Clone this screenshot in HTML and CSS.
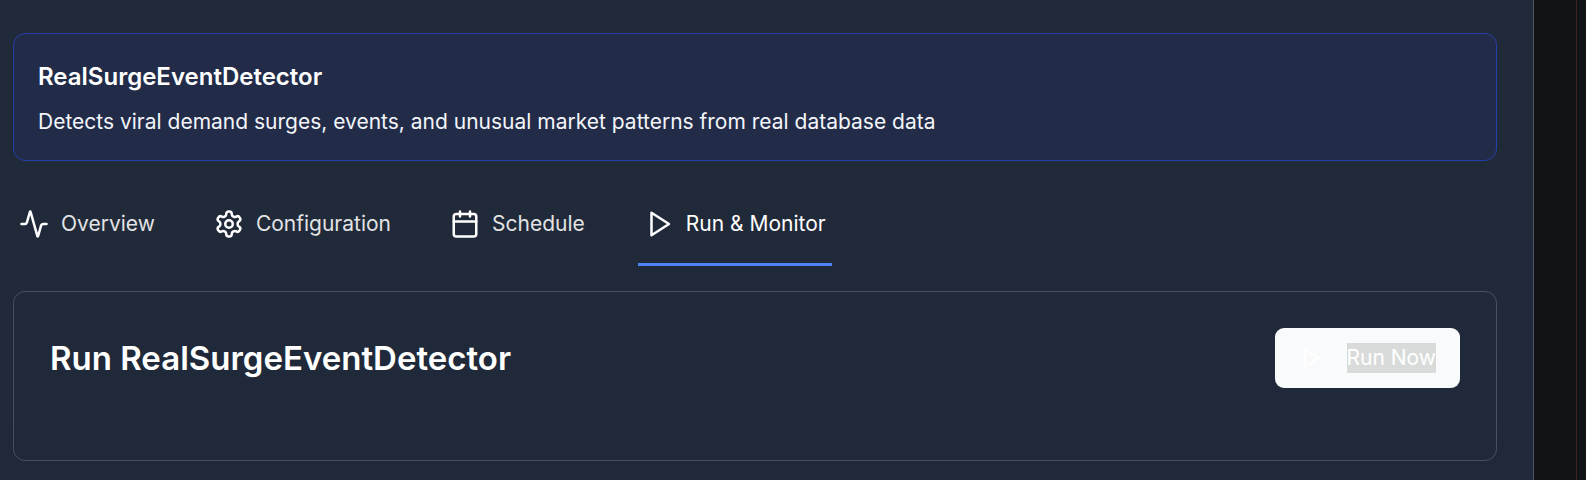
FILE: index.html
```html
<!DOCTYPE html>
<html lang="en">
<head>
<meta charset="utf-8">
<title>RealSurgeEventDetector</title>
<link rel="stylesheet" href="styles.css">
</head>
<body>
<div class="shell">
  <main class="panel">
    <section class="summary">
      <h3 class="summary-title">RealSurgeEventDetector</h3>
      <p class="summary-text">Detects viral demand surges, events, and unusual market patterns from real database data</p>
    </section>
    <nav class="tabs" role="tablist" aria-label="Agent sections">
      <button class="tab" type="button" role="tab" aria-selected="false">
        <svg class="icon" viewBox="0 0 24 24" aria-hidden="true"><path d="M22 12h-2.48a2 2 0 0 0-1.93 1.46l-2.35 8.36a.25.25 0 0 1-.48 0L9.24 2.18a.25.25 0 0 0-.48 0l-2.35 8.36A2 2 0 0 1 4.49 12H2"/></svg>
        <span>Overview</span>
      </button>
      <button class="tab" type="button" role="tab" aria-selected="false">
        <svg class="icon" viewBox="0 0 24 24" aria-hidden="true"><path d="M12.22 2h-.44a2 2 0 0 0-2 2v.18a2 2 0 0 1-1 1.73l-.43.25a2 2 0 0 1-2 0l-.15-.08a2 2 0 0 0-2.73.73l-.22.38a2 2 0 0 0 .73 2.73l.15.1a2 2 0 0 1 1 1.72v.51a2 2 0 0 1-1 1.74l-.15.09a2 2 0 0 0-.73 2.73l.22.38a2 2 0 0 0 2.73.73l.15-.08a2 2 0 0 1 2 0l.43.25a2 2 0 0 1 1 1.73V20a2 2 0 0 0 2 2h.44a2 2 0 0 0 2-2v-.18a2 2 0 0 1 1-1.73l.43-.25a2 2 0 0 1 2 0l.15.08a2 2 0 0 0 2.73-.73l.22-.39a2 2 0 0 0-.73-2.73l-.15-.08a2 2 0 0 1-1-1.74v-.5a2 2 0 0 1 1-1.74l.15-.09a2 2 0 0 0 .73-2.73l-.22-.38a2 2 0 0 0-2.73-.73l-.15.08a2 2 0 0 1-2 0l-.43-.25a2 2 0 0 1-1-1.73V4a2 2 0 0 0-2-2z"/><circle cx="12" cy="12" r="3"/></svg>
        <span>Configuration</span>
      </button>
      <button class="tab" type="button" role="tab" aria-selected="false">
        <svg class="icon" viewBox="0 0 24 24" aria-hidden="true"><path d="M8 2v4M16 2v4M3 10h18"/><rect x="3" y="4" width="18" height="18" rx="2"/></svg>
        <span>Schedule</span>
      </button>
      <button class="tab tab-active" type="button" role="tab" aria-selected="true">
        <svg class="icon" viewBox="0 0 24 24" aria-hidden="true"><path d="M6 3l14 9-14 9z"/></svg>
        <span>Run &amp; Monitor</span>
      </button>
    </nav>
    <section class="run-card">
      <h2 class="run-title">Run RealSurgeEventDetector</h2>
      <button class="run-button" type="button">
        <svg class="icon icon-small" viewBox="0 0 24 24" aria-hidden="true"><path d="M6 3l14 9-14 9z"/></svg>
        <span class="run-label">Run Now</span>
      </button>
    </section>
  </main>
  <aside class="gutter"></aside>
</div>
</body>
</html>
```
FILE: styles.css
```css
* {
  box-sizing: border-box;
}

body {
  margin: 0;
  background: #111317;
  color: #ffffff;
  font-family: Inter, "Liberation Sans", sans-serif;
}

h2, h3, p {
  margin: 0;
}

button {
  border: 0;
  background: none;
  color: inherit;
  font: inherit;
}

.shell {
  display: flex;
  min-height: 100vh;
}

.panel {
  flex: 1;
  padding: 33px 36px 18px 13px;
  border-right: 1px solid #4b5563;
  background: linear-gradient(#212a38, #20293a);
}

.gutter {
  width: 43px;
  margin-right: 9px;
  border-right: 1px solid #3d261f;
}

.summary {
  padding: 24px 24px 22px;
  border: 1px solid #263fa8;
  border-radius: 12px;
  background: #222c49;
}

.summary-title {
  margin-bottom: 10px;
  font-size: 24px;
  line-height: 38px;
  font-weight: 600;
}

.summary-text {
  color: #f3f5f9;
  font-size: 21px;
  line-height: 32px;
}

.tabs {
  display: flex;
  gap: 47px;
  margin-top: 47px;
}

.tab {
  display: flex;
  align-items: center;
  gap: 12px;
  padding: 0 6px 23px;
  border-bottom: 3px solid transparent;
  color: #e2e3e4;
  font-size: 21px;
  line-height: 32px;
  font-weight: 400;
  white-space: nowrap;
}

.tab-active {
  border-bottom-color: #4d82f0;
  color: #ffffff;
}

.icon {
  width: 30px;
  height: 30px;
  fill: none;
  stroke: #ffffff;
  stroke-width: 2;
  stroke-linecap: round;
  stroke-linejoin: round;
}

.run-card {
  display: flex;
  align-items: flex-start;
  justify-content: space-between;
  min-height: 170px;
  margin-top: 25px;
  padding: 36px;
  border: 1px solid #465060;
  border-radius: 12px;
}

.run-title {
  font-size: 33px;
  line-height: 60px;
  font-weight: 600;
}

.run-button {
  display: flex;
  align-items: center;
  gap: 24px;
  padding: 15px 24px;
  border-radius: 9px;
  background: #f9fafc;
  color: #ffffff;
  font-size: 21px;
  line-height: 30px;
  font-weight: 400;
  white-space: nowrap;
}

.icon-small {
  width: 24px;
  height: 24px;
}

.run-label {
  background: #d9dbda;
}
```
